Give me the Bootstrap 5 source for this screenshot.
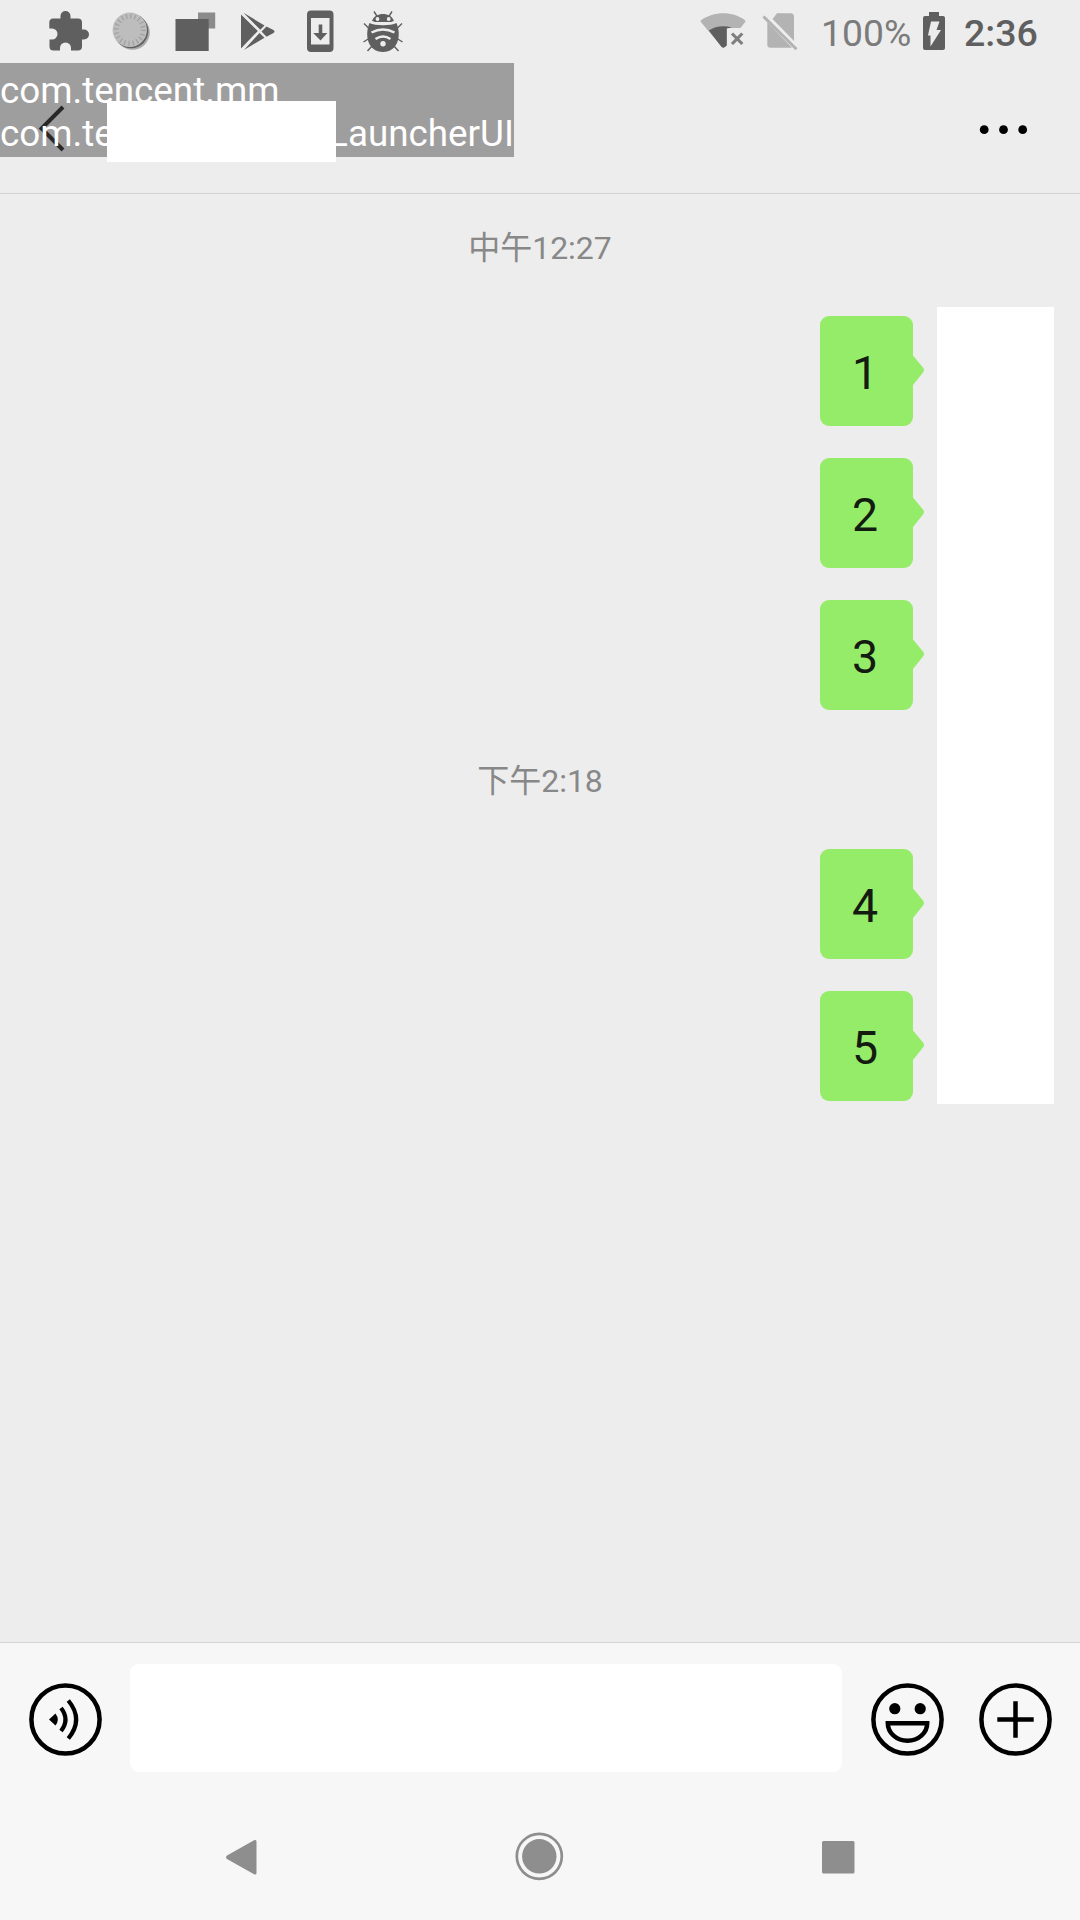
<!DOCTYPE html>
<html lang="zh-CN">
<head>
<meta charset="utf-8">
<meta name="viewport" content="width=device-width, initial-scale=1">
<title>Chat</title>
<link href="https://cdn.jsdelivr.net/npm/bootstrap@5.3.0/dist/css/bootstrap.min.css" rel="stylesheet">
<style>
body{width:1080px;height:1920px;background:#ededed;font-family:Roboto,"Noto Sans CJK SC",sans-serif;overflow:hidden}
svg{display:block;flex:none}
.statusbar{height:63px;padding-left:38px;color:#5f5f5f}
.status-right{width:385px}
.pct{width:99px;padding-left:5px;font-size:37.3px;line-height:63px;color:#7b7b7b;padding-top:2px}
.clock{width:115px;padding-left:14px;font-size:37.5px;line-height:63px;font-weight:500;padding-top:2px}
.titlebar{height:131px;border-bottom:1px solid #d3d3d3}
.debug-label{left:0;top:0;width:514px;height:94px;background:rgba(80,80,80,.5);color:#fff;font-size:36.8px;line-height:43px;padding-top:6px;white-space:nowrap}
.title-cover{left:107px;top:38px;width:229px;height:61px;background:#fff}
.chat{height:1448px;padding-top:31px}
.stamp{height:46px;line-height:46px;font-size:32px;color:#888}
.bubbles{padding:45px 167px 0 0;gap:32px}
.bubble{width:93px;height:110px;border-radius:9px;background:#95ec69;color:#141b10;font-size:46.5px;line-height:114px;text-align:center;padding-right:3px}
.bubble svg{left:92px;top:38px}
.stamp-later{margin-top:48px}
.avatars{left:937px;top:113px;width:117px;height:797px;background:#fff}
.composer{height:151px;background:#f7f7f7;border-top:1px solid #d3d3d3;padding:21px 25px 0 26px}
.entry{width:712px;height:108px;border:0;border-radius:9px;background:#fff;margin:0 26px 0 25px}
.navkeys{height:127px;background:#f7f7f7;padding:1px 214px 0}
</style>
</head>
<body class="d-flex flex-column">
<header class="statusbar d-flex justify-content-between">
  <div class="d-flex">
    <svg width="63" height="63" viewBox="38 0 63 63" fill="#5f5f5f"><path d="M53 18.500H60.500V16a5 5 0 0 1 10 0v2.500H78a4 4 0 0 1 4 4V29.500h2a5 5 0 0 1 0 10H82V46.500a4 4 0 0 1-4 4H71V48a5.500 5.500 0 0 0-11 0v2.500H53.500a4 4 0 0 1-4-4V39.500H52a5.500 5.500 0 0 0 0-11H49.300V22.500a4 4 0 0 1 3.700-4z"/></svg>
    <svg width="63" height="63" viewBox="101 0 63 63"><circle cx="132.500" cy="32.500" r="17.300" fill="#aaa"/><circle cx="131" cy="31" r="17.300" fill="#5f5f5f"/><circle cx="129.800" cy="29.800" r="17.200" fill="#bdbdbd"/><circle cx="129.800" cy="29.800" r="13.500" fill="none" stroke="#a2a2a2" stroke-width="5" stroke-dasharray="1.300 2.941"/></svg>
    <svg width="63" height="63" viewBox="164 0 63 63"><path fill="#8b8b8b" d="M198 12.500h17.200v16H198z"/><path fill="#5f5f5f" d="M175.500 19h33.200v32h-33.200z"/></svg>
    <svg width="63" height="63" viewBox="227 0 63 63" fill="#5f5f5f"><path d="M241 14.500 257.800 31 241 48.500zM243.500 12.800 264.500 25.500 260.300 29.800zM266.500 26.500 273.500 30q2 1.500 0 3L266.500 36.800 261.500 31.500zM259.500 33 264.500 37.700 244 50z"/></svg>
    <svg width="63" height="63" viewBox="290 0 63 63" fill="#5f5f5f"><path fill-rule="evenodd" d="M311 10.500h18.500a4 4 0 0 1 4 4v33.500a4 4 0 0 1-4 4H311a4 4 0 0 1-4-4V14.500a4 4 0 0 1 4-4zM311 18v26.500h18.500V18z"/><path d="M318.700 24.500h3.600v8.500h5L320.500 40.500 313.200 33h5.500z"/></svg>
    <svg width="63" height="63" viewBox="353 0 63 63"><path fill="none" stroke="#5f5f5f" stroke-width="1.400" d="M374 11.500 377.500 17M392 11.500 388.500 17M364 23.500 369 28.500M402 23.500 397 28.500M363.500 42 369 38.500M402.500 42 397 38.500M367.500 51 372 46M398.500 51 394 46"/><path fill="#5f5f5f" d="M372 21C374 16 378 14 383 14s9 2 11 7l-2 1H374zM369.500 23C375 26 391 26 396.500 23 402 36 397.500 52 383 52S364 36 369.500 23z"/><g fill="#ededed"><circle cx="377.500" cy="19" r="1.900"/><circle cx="388.700" cy="19" r="1.900"/><circle cx="383" cy="43.800" r="2.700"/></g><path fill="none" stroke="#ededed" stroke-width="2.500" d="M371.500 32.500Q383 26.500 394.500 32.500M375.500 39Q383 34 390.500 39"/><path fill="none" stroke="#ededed" stroke-width="1.300" d="M371 21.500Q383 25.500 395 21.500"/></svg>
  </div>
  <div class="status-right d-flex">
    <svg width="62" height="63" viewBox="695 0 62 63"><path fill="#b3b3b3" d="M701 20.200C714 11 733 11 745 20.200q1 1 0 2l-4.500 5.800H727V45L723 48 701 22.200q-1-1 0-2z"/><path fill="#5f5f5f" d="M708.800 30.500C715 26 724 25 732 27.500L726.700 28.500V45.500Q723 50 720 45z"/><path stroke="#7f7f7f" stroke-width="3.200" d="M732 33.500 742.300 44M742.300 33.500 732 44"/></svg>
    <svg width="59" height="63" viewBox="757 0 59 63"><path fill="#b3b3b3" d="M777 13.200h13.500a3.500 3.500 0 0 1 3.500 3.500V41L772.500 19zM767.300 22 792 47.800H770.500a3.200 3.200 0 0 1-3.200-3.200z"/><path stroke="#b3b3b3" stroke-width="3" d="M763.500 16.500 796.500 49.300"/></svg>
    <div class="pct">100%</div>
    <svg width="35" height="63" viewBox="915 0 35 63"><path fill="#5f5f5f" d="M929 12h10v4h4a2 2 0 0 1 2 2v30a2 2 0 0 1-2 2H925a2 2 0 0 1-2-2V18a2 2 0 0 1 2-2h4z"/><path fill="#ededed" d="M931 21.500h8.500l-3 8.500h4.500L930.500 46.500V35.500H928z"/></svg>
    <div class="clock">2:36</div>
  </div>
</header>
<nav class="titlebar position-relative d-flex justify-content-between">
  <svg width="100" height="130" viewBox="0 63 100 130"><path d="M63 107 41.500 128.500 63 150" fill="none" stroke="#000" stroke-width="4"/></svg>
  <svg width="120" height="130" viewBox="960 63 120 130"><circle cx="984.200" cy="129.700" r="4.400"/><circle cx="1003.500" cy="129.700" r="4.400"/><circle cx="1022.700" cy="129.700" r="4.400"/></svg>
  <div class="debug-label position-absolute">com.tencent.mm<br>com.tencent.mm.ui.LauncherUI</div>
  <div class="title-cover position-absolute"></div>
</nav>
<main class="chat position-relative">
  <div class="stamp text-center">中午12:27</div>
  <div class="bubbles d-flex flex-column align-items-end">
    <div class="bubble position-relative"><span>1</span><svg class="position-absolute" width="13" height="34"><path fill="#95ec69" d="M0 0 1 1.500 11 13.500q2 2.500 0 5L1 31 0 33z"/></svg></div>
    <div class="bubble position-relative"><span>2</span><svg class="position-absolute" width="13" height="34"><path fill="#95ec69" d="M0 0 1 1.500 11 13.500q2 2.500 0 5L1 31 0 33z"/></svg></div>
    <div class="bubble position-relative"><span>3</span><svg class="position-absolute" width="13" height="34"><path fill="#95ec69" d="M0 0 1 1.500 11 13.500q2 2.500 0 5L1 31 0 33z"/></svg></div>
  </div>
  <div class="stamp stamp-later text-center">下午2:18</div>
  <div class="bubbles d-flex flex-column align-items-end">
    <div class="bubble position-relative"><span>4</span><svg class="position-absolute" width="13" height="34"><path fill="#95ec69" d="M0 0 1 1.500 11 13.500q2 2.500 0 5L1 31 0 33z"/></svg></div>
    <div class="bubble position-relative"><span>5</span><svg class="position-absolute" width="13" height="34"><path fill="#95ec69" d="M0 0 1 1.500 11 13.500q2 2.500 0 5L1 31 0 33z"/></svg></div>
  </div>
  <div class="avatars position-absolute"></div>
</main>
<section class="composer d-flex align-items-start">
  <svg width="79" height="108" viewBox="26 1664 79 108"><circle cx="65.500" cy="1719.500" r="34.100" fill="none" stroke="#000" stroke-width="4.500"/><path d="M49 1719.500 55.500 1713.500Q60 1719.500 55.500 1725.500z"/><path fill="none" stroke="#000" stroke-width="4.200" d="M61 1708Q70 1719.500 61 1731M68.300 1700.500Q84 1719.500 68.300 1738.500"/></svg>
  <div class="entry"></div>
  <svg width="79" height="108" viewBox="868 1664 79 108" fill="none" stroke="#000" stroke-width="4.500"><circle cx="907.500" cy="1719.500" r="34.100"/><path d="M887.800 1723.300H927.200A19.700 17.500 0 0 1 887.800 1723.300z"/><g fill="#000" stroke="none"><circle cx="894.800" cy="1708.700" r="5.600"/><circle cx="920.200" cy="1708.700" r="5.600"/></g></svg>
  <svg class="ms-auto" width="79" height="108" viewBox="976 1664 79 108" fill="none" stroke="#000" stroke-width="4.500"><circle cx="1015.500" cy="1719.500" r="34.100"/><path d="M997.300 1719.500h36.400M1015.500 1701.300v36.400"/></svg>
</section>
<footer class="navkeys d-flex justify-content-between">
  <svg width="56" height="126" viewBox="214 1794 56 126" fill="#8e8e8e"><path d="M254.500 1840q2-.5 2 1.500v31.500q0 2-2 1.500L227 1859q-2-1.500 0-3.500z"/></svg>
  <svg width="56" height="126" viewBox="512 1794 56 126"><circle cx="539.300" cy="1856.300" r="22.500" fill="none" stroke="#8e8e8e" stroke-width="2.700"/><circle cx="539.300" cy="1856.300" r="17.200" fill="#8e8e8e"/></svg>
  <svg width="56" height="126" viewBox="810 1794 56 126"><rect x="822" y="1841" width="32.500" height="32.500" rx="1.500" fill="#8e8e8e"/></svg>
</footer>
<script src="https://cdn.jsdelivr.net/npm/bootstrap@5.3.0/dist/js/bootstrap.bundle.min.js"></script>
</body>
</html>
